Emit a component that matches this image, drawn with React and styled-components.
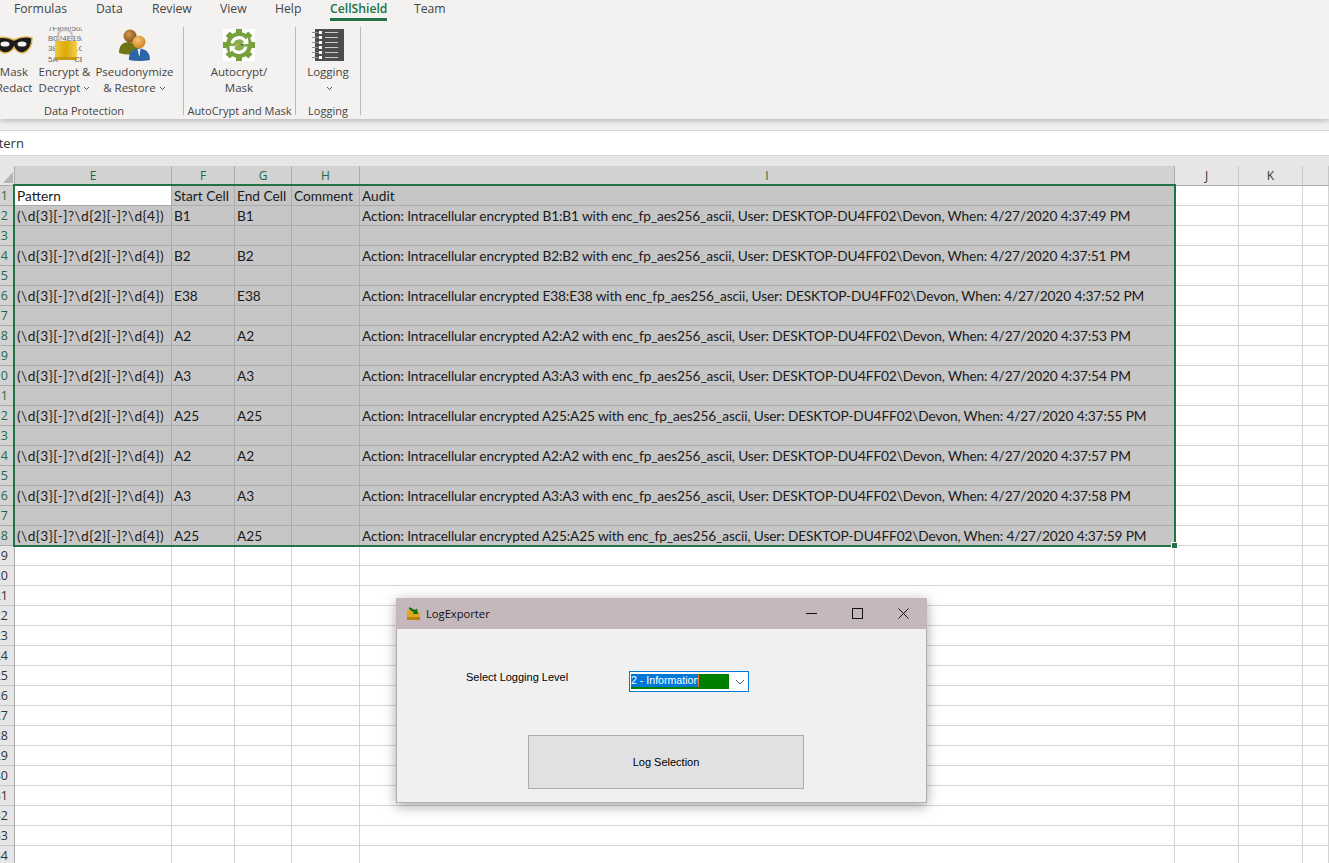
import React from 'react';
import styled, { createGlobalStyle } from 'styled-components';

const GlobalStyle = createGlobalStyle`
  html, body {
    margin: 0;
    height: 100%;
    overflow: hidden;
    background: #ffffff;
  }
`;

const uiFont = `"Open Sans", "Noto Sans", sans-serif`;
const cellFont = `Lato, "Open Sans", sans-serif`;
const formFont = `"Liberation Sans", Arial, sans-serif`;

const Page = styled.div`
  position: relative;
  width: 1329px;
  height: 863px;
  overflow: hidden;
  display: flex;
  flex-direction: column;
  background: #e6e6e6;
`;

// Ribbon
const Ribbon = styled.div`
  height: 119px;
  flex: none;
  background: #f3f2f1;
  box-shadow: 0 2px 5px rgba(0, 0, 0, 0.22);
  position: relative;
  z-index: 2;
`;

const TabRow = styled.div`
  height: 21px;
  display: flex;
  padding-left: 14px;
  font: 12.2px ${uiFont};
  color: #444444;
`;

const Tab = styled.div`
  width: ${props => props.$width}px;
  height: 21px;
  box-sizing: border-box;
  line-height: 18px;
  white-space: nowrap;
  ${props => props.$active && `
    color: #217346;
    font-weight: 600;
    border-bottom: 3px solid #217346;
    text-align: center;
  `}
`;

const GroupRow = styled.div`
  display: flex;
  margin-left: -15px;
  padding-top: 6px;
`;

const Group = styled.div`
  width: ${props => props.$width}px;
  height: 88px;
  flex: none;
  display: flex;
  flex-direction: column;
  border-right: 1px solid #b9b9b9;
  box-sizing: border-box;
`;

const GroupButtons = styled.div`
  height: 78px;
  flex: none;
  display: flex;
  padding-left: ${props => props.$pad || 0}px;
  gap: ${props => props.$gap || 0}px;
`;

const GroupLabel = styled.div`
  font: 11px ${uiFont};
  color: #444444;
  text-align: center;
  line-height: 12px;
  white-space: nowrap;
`;

const RibbonButton = styled.div`
  width: ${props => props.$width}px;
  flex: none;
  display: flex;
  flex-direction: column;
  align-items: center;
  font: 11.5px/16px ${uiFont};
  color: #444444;
  white-space: nowrap;
`;

const IconSlot = styled.div`
  height: 35px;
  margin-bottom: 2px;
  display: flex;
  align-items: center;
  justify-content: center;
`;

const Caret = styled.svg`
  width: 7px;
  height: 5px;
  margin-left: 3px;
  vertical-align: 1px;
`;

// Formula bar
const RibbonGap = styled.div`
  height: 11px;
  flex: none;
  background: #efefef;
`;

const FormulaBar = styled.div`
  height: 26px;
  flex: none;
  box-sizing: border-box;
  background: #ffffff;
  border-top: 1px solid #d4d4d4;
  border-bottom: 1px solid #d4d4d4;
  font: 13px/25px ${uiFont};
  color: #333333;
  overflow: hidden;
`;

const FormulaText = styled.div`
  margin-left: -21px;
`;

const FormulaGap = styled.div`
  height: 10px;
  flex: none;
  background: #e6e6e6;
`;

// Sheet
const Sheet = styled.div`
  position: relative;
  flex: 1;
  display: grid;
  grid-template-columns: 15px 157px 63px 57px 68px 815px 64px 64px 26px;
  grid-auto-rows: 20px;
  background: #ffffff;
  overflow: hidden;
`;

const Corner = styled.div`
  background: #e6e6e6;
  border-right: 1px solid #ababab;
  border-bottom: 1px solid #ababab;
  box-sizing: border-box;
  position: relative;

  &::after {
    content: '';
    position: absolute;
    right: 1px;
    bottom: 2px;
    border-style: solid;
    border-width: 0 0 11px 10px;
    border-color: transparent transparent #b5b5b5 transparent;
  }
`;

const ColHeader = styled.div`
  background: ${props => (props.$selected ? '#d2d2d2' : '#e6e6e6')};
  border-right: 1px solid ${props => (props.$selected ? '#ababab' : '#c6c6c6')};
  border-bottom: 1px solid #ababab;
  box-sizing: border-box;
  font: 12px/19px ${uiFont};
  color: ${props => (props.$selected ? '#1e6b42' : '#333333')};
  text-align: center;
`;

const RowHeader = styled.div`
  background: ${props => (props.$selected ? '#d2d2d2' : '#e6e6e6')};
  border-right: 1px solid #ababab;
  border-bottom: 1px solid ${props => (props.$selected ? '#ababab' : '#c6c6c6')};
  box-sizing: border-box;
  overflow: hidden;
  display: flex;
  justify-content: flex-end;
  padding-right: 6px;
  font: 12.5px/19px ${uiFont};
  color: ${props => (props.$selected ? '#1e6b42' : '#333333')};
`;

const Cell = styled.div`
  box-sizing: border-box;
  background: ${props => (props.$active ? '#ffffff' : props.$selected ? '#c6c6c6' : '#ffffff')};
  border-right: 1px solid ${props => (props.$selected ? '#acacac' : '#d4d4d4')};
  border-bottom: 1px solid ${props => (props.$selected ? '#acacac' : '#d4d4d4')};
  padding-left: 2px;
  font: 13.7px/20px ${cellFont};
  color: #1a1a1a;
  white-space: nowrap;
  overflow: hidden;
`;

const PatternText = styled.span`
  letter-spacing: 0.42px;
`;

const AuditText = styled.span`
  letter-spacing: -0.12px;
`;

const SelectionBox = styled.div`
  position: absolute;
  left: 13px;
  top: 18px;
  width: 1163px;
  height: 363px;
  box-sizing: border-box;
  border: 2px solid #217346;
  pointer-events: none;
`;

const FillHandle = styled.div`
  position: absolute;
  right: -4px;
  bottom: -4px;
  width: 5px;
  height: 5px;
  background: #217346;
  border: 1px solid #ffffff;
`;

// LogExporter dialog
const Dialog = styled.div`
  position: absolute;
  left: 396px;
  top: 598px;
  width: 531px;
  height: 205px;
  background: #f0f0f0;
  border: 1px solid #b5abb0;
  border-top: none;
  box-sizing: border-box;
  box-shadow: 0 3px 12px rgba(0, 0, 0, 0.35);
  z-index: 3;
  display: flex;
  flex-direction: column;
`;

const TitleBar = styled.div`
  height: 31px;
  flex: none;
  margin: 0 -1px;
  background: #c4b8bd;
  display: flex;
  align-items: center;
  padding: 0 1px 0 11px;
  font: 11.2px ${uiFont};
  color: #111111;
`;

const TitleText = styled.span`
  margin-left: 5px;
  flex: 1;
`;

const WindowButton = styled.div`
  width: 46px;
  height: 31px;
  display: flex;
  align-items: center;
  justify-content: center;
`;

const DialogBody = styled.div`
  flex: 1;
  display: flex;
  flex-direction: column;
  align-items: flex-start;
  font: 11px ${formFont};
  color: #000000;
`;

const LevelRow = styled.div`
  display: flex;
  align-items: flex-start;
  margin: 42px 0 0 69px;
`;

const LevelLabel = styled.div`
  width: 163px;
  line-height: 14px;
  margin-top: -1px;
`;

const Combo = styled.div`
  width: 120px;
  height: 21px;
  box-sizing: border-box;
  border: 1px solid #0078d7;
  background: #ffffff;
  padding: 2px 1px;
  display: flex;
  align-items: flex-start;
  position: relative;
`;

const ComboFill = styled.div`
  width: 98px;
  height: 15px;
  background: #008000;
`;

const ComboValue = styled.div`
  width: 68px;
  height: 13px;
  background: #0078d7;
  color: #ffffff;
  line-height: 13px;
  font-size: 10.6px;
  white-space: nowrap;
  overflow: hidden;
  border-right: 1px solid #f07020;
  box-sizing: border-box;
`;

const ComboArrow = styled.svg`
  position: absolute;
  right: 3px;
  top: 7px;
  width: 10px;
  height: 6px;
`;

const ActionButton = styled.div`
  width: 276px;
  height: 54px;
  margin: 43px 0 0 131px;
  box-sizing: border-box;
  background: #e1e1e1;
  border: 1px solid #adadad;
  display: flex;
  align-items: center;
  justify-content: center;
`;

// Drawings
const MaskIcon = () => (
  <svg width="40" height="22" viewBox="0 0 40 22">
    <path d="M1 5 Q10 1 20 6 Q30 1 38 4 Q38 16 29 19 Q23 19 20 13 Q17 19 10 19 Q1 16 1 5Z" fill="#1b1b1b" stroke="#d9b34a" strokeWidth="1.4" />
    <ellipse cx="11" cy="10" rx="4.5" ry="2.6" fill="#f3f2f1" />
    <ellipse cx="28" cy="10" rx="4.5" ry="2.6" fill="#f3f2f1" />
  </svg>
);

const LockIcon = () => (
  <svg width="35" height="35" viewBox="0 0 35 35">
    <defs>
      <linearGradient id="lockGold" x1="0" y1="0" x2="1" y2="0">
        <stop offset="0" stopColor="#f0c93a" />
        <stop offset="0.5" stopColor="#dba908" />
        <stop offset="1" stopColor="#f2cf55" />
      </linearGradient>
    </defs>
    <g fontFamily="Liberation Sans, sans-serif" fontSize="8" fill="#666666">
      <text x="1" y="4">7F8W/502</text>
      <text x="1" y="14">B0?4E19A</text>
      <text x="1" y="24">38</text>
      <text x="27" y="24">1C</text>
      <text x="1" y="35">5A</text>
      <text x="27" y="35">CB</text>
    </g>
    <path d="M11 15 V9 Q11 3 18 3 Q25 3 25 9 V15" fill="none" stroke="#c2c2c2" strokeWidth="2" />
    <rect x="8" y="14" width="22" height="19" rx="1" fill="url(#lockGold)" />
    <rect x="8" y="30" width="22" height="3" fill="#c59a10" />
  </svg>
);

const PeopleIcon = () => (
  <svg width="34" height="32" viewBox="0 0 34 32">
    <defs>
      <radialGradient id="headBrown" cx="0.4" cy="0.35" r="0.7">
        <stop offset="0" stopColor="#d49a4c" />
        <stop offset="1" stopColor="#7a4a14" />
      </radialGradient>
      <radialGradient id="headOrange" cx="0.4" cy="0.35" r="0.7">
        <stop offset="0" stopColor="#f7c377" />
        <stop offset="1" stopColor="#d0801e" />
      </radialGradient>
    </defs>
    <circle cx="12" cy="7" r="6.5" fill="url(#headBrown)" />
    <path d="M1 24 Q1 13 11 13 Q21 13 22 24 Q11 27 1 24Z" fill="#6f7514" />
    <circle cx="21" cy="13" r="6.5" fill="url(#headOrange)" />
    <path d="M11 31 Q10 20 21 19.5 Q32 20 32 31 Q21 33 11 31Z" fill="#2c66a8" />
    <path d="M19.5 20 L22.5 20 L21.5 27 L21 27Z" fill="#eaf0f6" />
  </svg>
);

const GearIcon = () => (
  <svg width="32" height="32" viewBox="0 0 32 32">
    <rect width="32" height="32" fill="#ffffff" />
    <g fill="#76a03a">
      <rect x="13" y="0" width="6" height="32" />
      <rect x="0" y="13" width="32" height="6" />
      <rect x="13" y="0" width="6" height="32" transform="rotate(45 16 16)" />
      <rect x="13" y="0" width="6" height="32" transform="rotate(-45 16 16)" />
      <circle cx="16" cy="16" r="13" />
    </g>
    <circle cx="16" cy="16" r="8.5" fill="#87ad52" />
    <path d="M7.5 14 A8.8 8.8 0 0 1 23 10.5 L25 8.5 L25.5 15 L19 14.8 L21 12.7 A6 6 0 0 0 10.5 14.5Z" fill="#ffffff" />
    <path d="M24.5 18 A8.8 8.8 0 0 1 9 21.5 L7 23.5 L6.5 17 L13 17.2 L11 19.3 A6 6 0 0 0 21.5 17.5Z" fill="#ffffff" />
    <rect x="13" y="15" width="2" height="2" fill="#e0a91e" />
    <rect x="18" y="15" width="2" height="1.5" fill="#555533" />
  </svg>
);

const NotebookIcon = () => (
  <svg width="32" height="32" viewBox="0 0 32 32">
    <rect x="3" y="0" width="29" height="32" fill="#4d4d4d" />
    {[2, 7, 12, 17, 22, 27].map(y => (
      <g key={y}>
        <rect x="0" y={y + 1} width="7" height="1" fill="#8c8c8c" />
        <rect x="7" y={y} width="3" height="3" fill="#ffffff" />
        <rect x="13" y={y + 1} width="13" height="1" fill="#c8c8c8" />
      </g>
    ))}
  </svg>
);

const FolderIcon = () => (
  <svg width="14" height="14" viewBox="0 0 14 14">
    <path d="M0 3 L5 3 L6 5 L13 5 L13 13 L0 13Z" fill="#e2a91c" />
    <rect x="0" y="10" width="13" height="3" fill="#b9820f" />
    <path d="M2 0 L8 3 L10 1.5 L11 7 L5.5 7 L7 5.5 L2 2Z" fill="#0d6b10" />
  </svg>
);

const DownCaret = () => (
  <Caret viewBox="0 0 7 5">
    <path d="M1 1 L3.5 3.5 L6 1" fill="none" stroke="#555555" strokeWidth="1" />
  </Caret>
);

// Data
const columns = ['E', 'F', 'G', 'H', 'I', 'J', 'K', ''];
const pattern = '(\\d{3}[-]?\\d{2}[-]?\\d{4})';
const audit = [
  ['B1', '4:37:49'],
  ['B2', '4:37:51'],
  ['E38', '4:37:52'],
  ['A2', '4:37:53'],
  ['A3', '4:37:54'],
  ['A25', '4:37:55'],
  ['A2', '4:37:57'],
  ['A3', '4:37:58'],
  ['A25', '4:37:59'],
];

const rowValues = row => {
  if (row === 1) return ['Pattern', 'Start Cell', 'End Cell', 'Comment', 'Audit'];
  if (row > 18 || row % 2 === 1) return ['', '', '', '', ''];
  const [cell, time] = audit[row / 2 - 1];
  return [
    <PatternText>{pattern}</PatternText>,
    cell,
    cell,
    '',
    <AuditText>{`Action: Intracellular encrypted ${cell}:${cell} with enc_fp_aes256_ascii, User: DESKTOP-DU4FF02\\Devon, When: 4/27/2020 ${time} PM`}</AuditText>,
  ];
};

const rows = Array.from({ length: 35 }, (_, i) => i + 1);

function App() {
  return (
    <Page>
      <GlobalStyle />
      <Ribbon>
        <TabRow>
          <Tab $width={82}>Formulas</Tab>
          <Tab $width={56}>Data</Tab>
          <Tab $width={68}>Review</Tab>
          <Tab $width={55}>View</Tab>
          <Tab $width={55}>Help</Tab>
          <Tab $width={57} $active>CellShield</Tab>
          <Tab $width={27} />
          <Tab $width={50}>Team</Tab>
        </TabRow>
        <GroupRow>
          <Group $width={199}>
            <GroupButtons $pad={9} $gap={3}>
              <RibbonButton $width={40}>
                <IconSlot><MaskIcon /></IconSlot>
                <div>Mask</div>
                <div>Redact</div>
              </RibbonButton>
              <RibbonButton $width={55}>
                <IconSlot><LockIcon /></IconSlot>
                <div>Encrypt &amp;</div>
                <div>Decrypt<DownCaret /></div>
              </RibbonButton>
              <RibbonButton $width={79}>
                <IconSlot><PeopleIcon /></IconSlot>
                <div>Pseudonymize</div>
                <div>&amp; Restore<DownCaret /></div>
              </RibbonButton>
            </GroupButtons>
            <GroupLabel>Data Protection</GroupLabel>
          </Group>
          <Group $width={112}>
            <GroupButtons>
              <RibbonButton $width={110}>
                <IconSlot><GearIcon /></IconSlot>
                <div>Autocrypt/</div>
                <div>Mask</div>
              </RibbonButton>
            </GroupButtons>
            <GroupLabel>AutoCrypt and Mask</GroupLabel>
          </Group>
          <Group $width={65}>
            <GroupButtons>
              <RibbonButton $width={64}>
                <IconSlot><NotebookIcon /></IconSlot>
                <div>Logging</div>
                <div><DownCaret /></div>
              </RibbonButton>
            </GroupButtons>
            <GroupLabel>Logging</GroupLabel>
          </Group>
        </GroupRow>
      </Ribbon>
      <RibbonGap />
      <FormulaBar>
        <FormulaText>Pattern</FormulaText>
      </FormulaBar>
      <FormulaGap />
      <Sheet>
        <Corner />
        {columns.map((col, i) => (
          <ColHeader key={i} $selected={i < 5}>{col}</ColHeader>
        ))}
        {rows.map(row => (
          <React.Fragment key={row}>
            <RowHeader $selected={row <= 18}>{row}</RowHeader>
            {columns.map((_, i) => (
              <Cell key={i} $selected={row <= 18 && i < 5} $active={row === 1 && i === 0}>
                {i < 5 ? rowValues(row)[i] : ''}
              </Cell>
            ))}
          </React.Fragment>
        ))}
        <SelectionBox>
          <FillHandle />
        </SelectionBox>
      </Sheet>
      <Dialog>
        <TitleBar>
          <FolderIcon />
          <TitleText>LogExporter</TitleText>
          <WindowButton>
            <svg width="11" height="11" viewBox="0 0 11 11">
              <path d="M0 5.5 H11" stroke="#111111" strokeWidth="1" />
            </svg>
          </WindowButton>
          <WindowButton>
            <svg width="11" height="11" viewBox="0 0 11 11">
              <rect x="0.5" y="0.5" width="10" height="10" fill="none" stroke="#111111" strokeWidth="1" />
            </svg>
          </WindowButton>
          <WindowButton>
            <svg width="11" height="11" viewBox="0 0 11 11">
              <path d="M0.5 0.5 L10.5 10.5 M10.5 0.5 L0.5 10.5" stroke="#111111" strokeWidth="1" />
            </svg>
          </WindowButton>
        </TitleBar>
        <DialogBody>
          <LevelRow>
            <LevelLabel>Select Logging Level</LevelLabel>
            <Combo>
              <ComboFill>
                <ComboValue>2 - Information</ComboValue>
              </ComboFill>
              <ComboArrow viewBox="0 0 10 6">
                <path d="M1 1 L5 5 L9 1" fill="none" stroke="#555555" strokeWidth="1" />
              </ComboArrow>
            </Combo>
          </LevelRow>
          <ActionButton>Log Selection</ActionButton>
        </DialogBody>
      </Dialog>
    </Page>
  );
}

export default App;
